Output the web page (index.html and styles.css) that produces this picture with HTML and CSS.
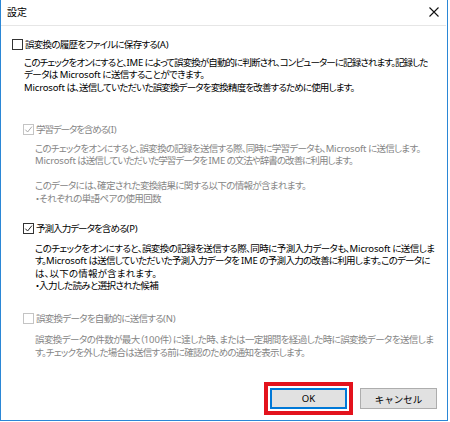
FILE: index.html
```html
<!DOCTYPE html>
<html lang="ja">
<head>
<meta charset="utf-8">
<title>設定</title>
<link rel="stylesheet" href="styles.css">
</head>
<body>
<div class="window">
  <div class="titlebar">
    <span class="title">設定</span>
    <svg class="close" width="10" height="10" viewBox="0 0 10 10"><path d="M0.5 0.5 L9.5 9.5 M9.5 0.5 L0.5 9.5" stroke="#111" stroke-width="1.1" fill="none"/></svg>
  </div>
  <div class="content">
    <section class="opt opt1">
      <div class="row"><span class="cb"></span><span class="lbl fit" data-w="143">誤変換の履歴をファイルに保存する<span class="lat">(A)</span></span></div>
      <div class="desc">
        <span class="ln fit" data-w="403">このチェックをオンにすると、<span class="lat">IME</span> によって誤変換が自動的に判断され、コンピューターに記録されます。記録した</span>
        <span class="ln fit" data-w="179">データは <span class="lat">Microsoft</span> に送信することができます。</span>
        <span class="ln fit" data-w="329"><span class="lat">Microsoft</span> は、送信していただいた誤変換データを変換精度を改善するために使用します。</span>
      </div>
    </section>
    <section class="opt sub opt2 disabled">
      <div class="row"><span class="cb checked"><svg viewBox="0 0 10 10"><path d="M1.5 5.2 L4 7.8 L8.8 1.8" fill="none" stroke-width="1.1"/></svg></span><span class="lbl fit" data-w="80">学習データを含める<span class="lat">(I)</span></span></div>
      <div class="desc">
        <span class="ln fit" data-w="384">このチェックをオンにすると、誤変換の記録を送信する際、同時に学習データも、<span class="lat">Microsoft</span> に送信します。</span>
        <span class="ln fit" data-w="316"><span class="lat">Microsoft</span> は送信していただいた学習データを <span class="lat">IME</span> の文法や辞書の改善に利用します。</span>
        <span class="ln blank"></span>
        <span class="ln fit" data-w="271">このデータには、確定された変換結果に関する以下の情報が含まれます。</span>
        <span class="ln fit" data-w="126">・それぞれの単語ペアの使用回数</span>
      </div>
    </section>
    <section class="opt sub opt3">
      <div class="row"><span class="cb checked"><svg viewBox="0 0 10 10"><path d="M1.5 5.2 L4 7.8 L8.8 1.8" fill="none" stroke-width="1.1"/></svg></span><span class="lbl fit" data-w="101">予測入力データを含める<span class="lat">(P)</span></span></div>
      <div class="desc">
        <span class="ln fit" data-w="398">このチェックをオンにすると、誤変換の記録を送信する際、同時に予測入力データも、<span class="lat">Microsoft</span> に送信しま</span>
        <span class="ln fit" data-w="393">す。<span class="lat">Microsoft</span> は送信していただいた予測入力データを <span class="lat">IME</span> の予測入力の改善に利用します。このデータに</span>
        <span class="ln fit" data-w="122">は、以下の情報が含まれます。</span>
        <span class="ln fit" data-w="123">・入力した読みと選択された候補</span>
      </div>
    </section>
    <section class="opt sub opt4 disabled">
      <div class="row"><span class="cb"></span><span class="lbl fit" data-w="139">誤変換データを自動的に送信する<span class="lat">(N)</span></span></div>
      <div class="desc">
        <span class="ln fit" data-w="398">誤変換データの件数が最大（<span class="lat">100</span>件）に達した時、または一定期間を経過した時に誤変換データを送信しま</span>
        <span class="ln fit" data-w="270">す。チェックを外した場合は送信する前に確認のための通知を表示します。</span>
      </div>
    </section>
  </div>
  <div class="buttons">
    <div class="focus-wrap"><button class="btn default">OK</button></div>
    <button class="btn">キャンセル</button>
  </div>
</div>
<script src="script.js"></script>
</body>
</html>
```
FILE: styles.css
```css
html, body {
  margin: 0;
  padding: 0;
  background: #ffffff;
}
body {
  width: 450px;
  height: 422px;
  font-family: "Noto Sans", "Noto Sans CJK JP", sans-serif;
  font-feature-settings: "palt";
  color: #000;
}
.window {
  box-sizing: border-box;
  width: 448px;
  height: 421px;
  border-left: 1px solid #2b87d6;
  border-right: 1px solid #2b87d6;
  border-bottom: 1px solid #2b87d6;
  display: flex;
  flex-direction: column;
}
.titlebar {
  box-sizing: border-box;
  height: 26px;
  border-bottom: 1px solid #e6e6e6;
  margin-right: 1px;
  display: flex;
  align-items: center;
  justify-content: space-between;
  padding: 0 4px 1px 6px;
}
.title {
  font-size: 10px;
  line-height: 13px;
}
.close {
  display: block;
  margin-right: 3px;
}
.content {
  display: flex;
  flex-direction: column;
}
.opt {
  display: flex;
  flex-direction: column;
  align-items: flex-start;
}
.opt1 {
  margin-top: 12px;
  padding-left: 11px;
}
.sub {
  padding-left: 22px;
}
.opt2 { margin-top: 29px; }
.opt3 { margin-top: 17px; }
.opt4 { margin-top: 19.5px; }
.row {
  display: flex;
  align-items: center;
  height: 13px;
  font-size: 9.5px;
  line-height: 13px;
  white-space: nowrap;
}
.cb {
  box-sizing: border-box;
  width: 11px;
  height: 11px;
  border: 1px solid #333;
  background: #fff;
  margin-right: 2px;
  display: flex;
  align-items: center;
  justify-content: center;
}
.cb svg {
  width: 9px;
  height: 9px;
  stroke: #222;
}
.lbl {
  display: inline-block;
}
.lat {
  letter-spacing: -0.15px;
}
.desc {
  display: flex;
  flex-direction: column;
  align-items: flex-start;
  margin: 5.5px 0 0 12px;
  font-size: 9.5px;
  line-height: 12.5px;
  white-space: nowrap;
}
.opt2 .desc { margin-top: 6.5px; }
.opt3 .desc { margin-top: 7.5px; }
.opt4 .desc { margin-top: 9px; }
.ln {
  display: block;
  height: 12.5px;
}
.disabled { color: #858585; }
.disabled .cb { border-color: #c4c4c4; }
.disabled .cb svg { stroke: #a6a6a6; }
.buttons {
  display: flex;
  justify-content: flex-end;
  gap: 13px;
  margin-top: auto;
  padding: 0 10px 11px 0;
}
.focus-wrap {
  position: relative;
  display: flex;
}
.focus-wrap::after {
  content: "";
  position: absolute;
  inset: -6px;
  border: 4px solid #e3121c;
  pointer-events: none;
}
.btn {
  box-sizing: border-box;
  width: 77px;
  height: 21px;
  margin: 0;
  padding: 0;
  background: #e1e1e1;
  border: 1px solid #adadad;
  font-family: "Noto Sans", "Noto Sans CJK JP", sans-serif;
  font-size: 9.5px;
  color: #000;
}
.btn.default {
  border: 2px solid #0078d7;
}
```
FILE: script.js
```js
document.querySelectorAll('.fit').forEach(function (el) {
  var target = parseFloat(el.getAttribute('data-w'));
  var natural = el.getBoundingClientRect().width;
  var total = Array.from(el.textContent).length;
  var latin = 0;
  el.querySelectorAll('.lat').forEach(function (s) {
    latin += Array.from(s.textContent).length;
  });
  var latinAdj = latin * -0.15;
  var n = total - latin;
  if (n > 0) {
    el.style.letterSpacing = ((target - natural - latinAdj) / n).toFixed(3) + 'px';
  }
});
```
